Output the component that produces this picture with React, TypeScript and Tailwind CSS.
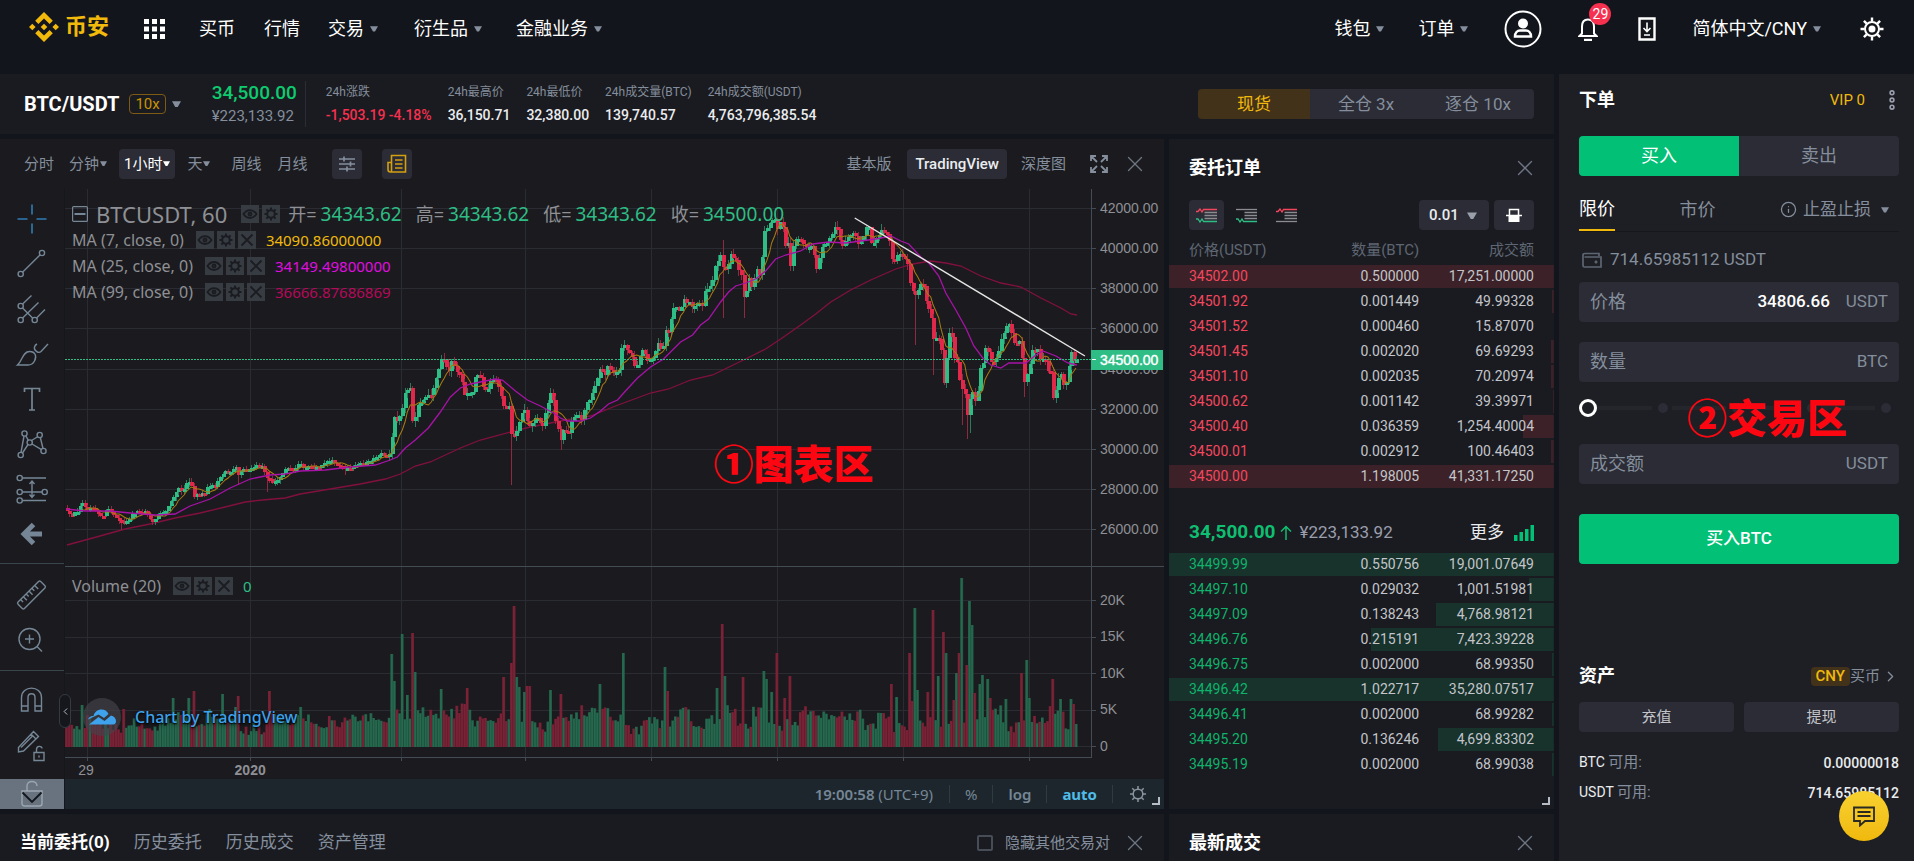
import { useState } from 'react';
import type { ReactNode } from 'react';
import { ChevronLeft, ChevronRight, Info, X } from 'lucide-react';
import clsx from 'clsx';

type Point = [number, number];
type Side = 'ask' | 'bid';

interface BookRow {
  price: string;
  amount: string;
  total: string;
  depth: number;
}

const ASKS: BookRow[] = [
  { price: '34502.00', amount: '0.500000', total: '17,251.00000', depth: 100 },
  { price: '34501.92', amount: '0.001449', total: '49.99328', depth: 0.4 },
  { price: '34501.52', amount: '0.000460', total: '15.87070', depth: 0 },
  { price: '34501.45', amount: '0.002020', total: '69.69293', depth: 0.6 },
  { price: '34501.10', amount: '0.002035', total: '70.20974', depth: 0.6 },
  { price: '34500.62', amount: '0.001142', total: '39.39971', depth: 0.3 },
  { price: '34500.40', amount: '0.036359', total: '1,254.40004', depth: 8 },
  { price: '34500.01', amount: '0.002912', total: '100.46403', depth: 0.7 },
  { price: '34500.00', amount: '1.198005', total: '41,331.17250', depth: 100 },
];

const BIDS: BookRow[] = [
  { price: '34499.99', amount: '0.550756', total: '19,001.07649', depth: 100 },
  { price: '34497.10', amount: '0.029032', total: '1,001.51981', depth: 6.4 },
  { price: '34497.09', amount: '0.138243', total: '4,768.98121', depth: 30.5 },
  { price: '34496.76', amount: '0.215191', total: '7,423.39228', depth: 47.5 },
  { price: '34496.75', amount: '0.002000', total: '68.99350', depth: 0.5 },
  { price: '34496.42', amount: '1.022717', total: '35,280.07517', depth: 100 },
  { price: '34496.41', amount: '0.002000', total: '68.99282', depth: 0.5 },
  { price: '34495.20', amount: '0.136246', total: '4,699.83302', depth: 30 },
  { price: '34495.19', amount: '0.002000', total: '68.99038', depth: 0.5 },
];

const STATS = [
  { label: '24h涨跌', value: '-1,503.19 -4.18%', down: true },
  { label: '24h最高价', value: '36,150.71' },
  { label: '24h最低价', value: '32,380.00' },
  { label: '24h成交量(BTC)', value: '139,740.57' },
  { label: '24h成交额(USDT)', value: '4,763,796,385.54' },
];

const AVERAGES = [
  { name: 'MA (7, close, 0)', value: '34090.86000000', color: 'text-[#f0b90b]' },
  { name: 'MA (25, close, 0)', value: '34149.49800000', color: 'text-[#e00de0]' },
  { name: 'MA (99, close, 0)', value: '36666.87686869', color: 'text-[#b5095a]' },
];

const OHLC = [
  ['开', '34343.62'],
  ['高', '34343.62'],
  ['低', '34343.62'],
  ['收', '34500.00'],
];

// Chart data, in the coordinates of the chart's viewBox
const CLOSES: Point[] = [
  [66, 510], [72, 516], [78, 509], [82, 503], [88, 510], [92, 507], [97, 512], [102, 517], [106, 508], [114, 515],
  [118, 521], [126, 522], [132, 514], [138, 511], [144, 511], [152, 522], [158, 514], [165, 511], [170, 503], [178, 488],
  [182, 493], [187, 482], [191, 483], [193, 496], [197, 493], [204, 494], [208, 486], [215, 486], [220, 476], [225, 472],
  [232, 472], [235, 466], [237, 475], [244, 470], [250, 469], [256, 466], [262, 467], [266, 477], [272, 482], [278, 481],
  [283, 471], [287, 467], [294, 470], [299, 461], [303, 467], [310, 465], [318, 468], [325, 463], [332, 460], [337, 464],
  [344, 469], [352, 467], [358, 463], [366, 463], [374, 457], [382, 453], [386, 457], [389, 454], [392, 435], [394, 418],
  [397, 422], [401, 412], [403, 398], [407, 390], [411, 388], [413, 436], [416, 408], [421, 402], [426, 398], [429, 395],
  [432, 398], [434, 384], [437, 372], [441, 360], [444, 361], [448, 372], [451, 361], [456, 370], [460, 374], [464, 396],
  [468, 391], [473, 394], [475, 373], [480, 378], [483, 389], [487, 391], [491, 380], [496, 379], [500, 392], [504, 408],
  [509, 408], [512, 444], [516, 430], [519, 423], [523, 406], [527, 420], [530, 429], [534, 416], [538, 418], [542, 429],
  [546, 408], [550, 393], [553, 402], [556, 425], [561, 440], [564, 427], [568, 432], [572, 419], [577, 414], [582, 420],
  [585, 402], [590, 398], [595, 385], [600, 369], [605, 374], [608, 366], [614, 373], [618, 371], [621, 341], [626, 350],
  [630, 356], [634, 370], [640, 350], [643, 351], [647, 364], [652, 356], [657, 344], [661, 352], [664, 327], [667, 332],
  [671, 313], [674, 305], [678, 312], [682, 299], [687, 302], [691, 310], [697, 300], [701, 307], [704, 290], [710, 284],
  [714, 268], [719, 254], [722, 269], [726, 266], [730, 254], [734, 259], [737, 270], [741, 276], [743, 306], [747, 276],
  [750, 289], [755, 270], [758, 275], [761, 255], [763, 234], [767, 225], [771, 219], [774, 220], [777, 231], [780, 220],
  [782, 232], [785, 251], [787, 240], [789, 267], [793, 237], [799, 240], [806, 250], [811, 245], [815, 268], [817, 265],
  [820, 247], [827, 240], [834, 227], [836, 230], [841, 248], [846, 236], [853, 235], [858, 245], [861, 240], [864, 226],
  [868, 228], [870, 242], [875, 240], [879, 230], [884, 232], [888, 240], [892, 265], [897, 252], [901, 256], [906, 262],
  [909, 282], [913, 298], [918, 287], [921, 280], [925, 304], [929, 310], [932, 340], [937, 338], [940, 350], [942, 391],
  [945, 360], [948, 333], [951, 340], [954, 365], [957, 363], [959, 392], [963, 383], [965, 418], [969, 400], [971, 391],
  [975, 404], [979, 370], [983, 358], [985, 341], [989, 363], [994, 362], [998, 350], [1001, 335], [1004, 328], [1007, 320],
  [1010, 332], [1014, 345], [1018, 340], [1020, 348], [1023, 383], [1028, 370], [1030, 350], [1036, 349], [1040, 362], [1043, 354],
  [1046, 373], [1049, 368], [1052, 398], [1055, 387], [1059, 373], [1063, 385], [1066, 382], [1069, 350], [1073, 361], [1077, 360],
];

const MA25: Point[] = [
  [66, 509], [85, 511], [110, 511], [130, 513], [155, 515], [175, 514], [190, 506], [210, 499], [230, 488], [250, 479],
  [270, 475], [285, 474], [300, 471], [325, 470], [350, 467], [375, 465], [390, 460], [397, 457], [405, 448], [415, 440],
  [428, 428], [440, 412], [450, 397], [460, 388], [470, 384], [485, 381], [495, 379], [502, 380], [515, 391], [527, 400],
  [540, 406], [553, 413], [560, 418], [567, 421], [580, 421], [590, 418], [600, 411], [608, 404], [617, 400], [625, 391],
  [637, 378], [650, 367], [663, 359], [680, 342], [692, 335], [700, 325], [708, 319], [720, 302], [728, 292], [735, 286],
  [745, 283], [755, 279], [765, 271], [775, 259], [785, 255], [800, 251], [812, 244], [828, 242], [845, 243], [860, 241],
  [875, 239], [890, 236], [900, 241], [908, 244], [920, 257], [928, 263], [938, 276], [945, 293], [955, 310], [965, 328],
  [973, 346], [982, 358], [990, 365], [1000, 368], [1008, 363], [1025, 363], [1035, 355], [1042, 351], [1055, 356], [1067, 363],
  [1076, 365],
];

const MA99: Point[] = [
  [67, 545], [100, 536], [125, 529], [150, 524], [175, 518], [200, 513], [225, 507], [245, 502], [262, 500], [285, 498],
  [300, 494], [330, 489], [360, 484], [385, 479], [400, 474], [415, 466], [430, 462], [460, 448], [480, 440], [510, 432],
  [530, 427], [550, 423], [565, 420], [590, 416], [615, 406], [650, 393], [668, 389], [690, 380], [712, 375], [745, 359],
  [765, 349], [780, 339], [800, 325], [815, 314], [830, 302], [850, 290], [870, 280], [895, 269], [912, 264], [930, 261],
  [945, 263], [960, 266], [980, 276], [1000, 283], [1020, 287], [1040, 298], [1060, 308], [1070, 314], [1076, 315],
];

// x, far end of the wick
const LONG_WICKS: Point[] = [
  [122, 530], [237, 485], [268, 492], [345, 475], [512, 485], [561, 450], [721, 318], [742, 318], [914, 345], [932, 375],
  [960, 425], [967, 439], [970, 433], [1024, 397], [1051, 400],
];

// x, top of the bar, 1 = up
const SPIKES: [number, number, number][] = [
  [81, 705, 1], [87, 715, 0], [123, 709, 0], [173, 698, 1], [188, 698, 1], [193, 691, 0], [222, 694, 1], [238, 696, 0],
  [235, 707, 1], [269, 691, 0], [301, 707, 1], [329, 716, 0], [346, 716, 0], [392, 654, 1], [395, 681, 1], [398, 700, 0],
  [403, 634, 1], [407, 695, 1], [413, 633, 0], [416, 672, 1], [437, 671, 1], [441, 689, 1], [463, 685, 0], [466, 688, 0],
  [504, 677, 0], [510, 663, 0], [513, 606, 0], [516, 677, 1], [518, 687, 1], [523, 692, 1], [528, 686, 0], [549, 690, 1],
  [560, 694, 0], [599, 684, 1], [622, 653, 1], [665, 667, 1], [667, 691, 0], [716, 688, 1], [722, 624, 0], [725, 676, 1],
  [743, 677, 0], [763, 671, 1], [767, 679, 1], [770, 692, 1], [777, 653, 0], [784, 698, 0], [789, 676, 0], [892, 684, 0],
  [895, 697, 1], [908, 653, 0], [911, 701, 0], [915, 608, 1], [918, 690, 1], [926, 692, 0], [933, 610, 0], [937, 676, 1],
  [942, 632, 0], [945, 653, 1], [954, 700, 0], [957, 673, 1], [959, 653, 0], [962, 578, 1], [965, 665, 0], [968, 601, 1],
  [971, 625, 1], [975, 693, 0], [978, 684, 1], [981, 675, 1], [986, 679, 1], [989, 698, 0], [1005, 699, 1], [1022, 673, 0],
  [1025, 660, 1], [1028, 698, 1], [1052, 679, 0], [1060, 699, 1], [1070, 699, 1], [1073, 704, 0],
];

const PRICE_TICKS = [42000, 40000, 38000, 36000, 34000, 32000, 30000, 28000, 26000];
const VOLUME_TICKS = ['20K', '15K', '10K', '5K', '0'];
const GRID_X = [87, 250, 401, 525, 650, 776, 902, 1028];
const STEP = 2.6;

function noise(n: number) {
  const v = Math.sin(n * 127.1 + 11.7) * 43758.5453;
  return v - Math.floor(v);
}

function sample(points: Point[], x: number) {
  const i = points.findIndex((p) => p[0] >= x);
  if (i <= 0) return i === 0 ? points[0][1] : points[points.length - 1][1];
  const [x0, y0] = points[i - 1];
  const [x1, y1] = points[i];
  return y0 + ((y1 - y0) * (x - x0)) / (x1 - x0);
}

function near<T extends number[]>(list: T[], x: number): T | undefined {
  return list.find((p) => Math.abs(p[0] - x) <= STEP / 2);
}

const line = (points: Point[]) => points.map((p) => p.join(',')).join(' ');

function buildCandles() {
  const candles = [];
  let open = 508;
  for (let i = 0; i < 389; i++) {
    const x = 66.5 + i * STEP;
    const calm = x < 388 ? 2.5 : 4;
    const close = sample(CLOSES, x) + (noise(i) - 0.5) * calm;
    let high = Math.min(open, close) - noise(i + 500) * calm * 1.5;
    let low = Math.max(open, close) + noise(i + 900) * calm * 1.5;
    const wick = near(LONG_WICKS, x);
    if (wick) low = wick[1];
    if (wick && wick[0] === 721) high = 240;
    const bodyUp = close <= open;
    let up = bodyUp;
    const base = x < 388 ? 8 : 12;
    let top = 747 - base - noise(i + 40) * 12 - noise(Math.floor(i / 6) + 70) * 20;
    const spike = near(SPIKES, x);
    if (spike) {
      top = spike[1];
      up = spike[2] === 1;
    }
    candles.push({ x, open, close, high, low, bodyUp, up, top });
    open = close;
  }
  return candles;
}

const CANDLES = buildCandles();
const MA7: Point[] = CANDLES.slice(6).map((c, i) => [
  Math.round(c.x),
  Math.round(CANDLES.slice(i, i + 7).reduce((sum, k) => sum + k.close, 0) / 7),
]);

function Caret({ className = 'w-2 text-[#848e9c]' }: { className?: string }) {
  return (
    <svg viewBox="0 0 8 6" className={clsx('inline-block shrink-0', className)} fill="currentColor" aria-hidden="true">
      <path d="M0 0.3h8L5 5.6H3z" />
    </svg>
  );
}

function CloseButton({ className }: { className?: string }) {
  return (
    <button aria-label="close" className={clsx('text-[#6d7683]', className)}>
      <X size={26} strokeWidth={1.2} />
    </button>
  );
}

function ResizeMark() {
  return <span className="pointer-events-none absolute right-1 bottom-1 size-2 border-r-2 border-b-2 border-[#b7bdc6]" />;
}

function Logo() {
  return (
    <a href="#" className="flex items-center gap-1.5 pb-1 text-[#f0b90b]">
      <svg viewBox="0 0 30 30" className="size-[30px]" fill="currentColor" aria-hidden="true">
        <path d="M15 0l8.800 8.800-3.200 3.200L15 6.400 9.400 12 6.200 8.800z" />
        <path d="M15 30l8.800-8.800-3.200-3.200L15 23.600 9.400 18l-3.200 3.200z" />
        <path d="M15 11.700l3.300 3.300-3.300 3.300-3.300-3.300zM3.300 11.700L6.600 15l-3.300 3.300L0 15zM26.700 11.700L30 15l-3.300 3.300-3.300-3.300z" />
      </svg>
      <span className="text-[22px] leading-7 font-bold">币安</span>
    </a>
  );
}

function Header() {
  return (
    <header className="flex h-[74px] items-center justify-between pr-[30px] pb-4 pl-[29px] text-lg leading-6 whitespace-nowrap text-white">
      <nav className="flex items-center">
        <Logo />
        <button className="mr-[34px] ml-[35px]" aria-label="menu">
          <svg viewBox="0 0 21 20" className="h-5 w-[21px]" fill="currentColor">
            {[0, 8, 16].flatMap((x) => [0, 7.5, 15].map((y) => <rect key={`${x}-${y}`} x={x} y={y} width="5" height="5" />))}
          </svg>
        </button>
        <a href="#" className="mr-[29px]">买币</a>
        <a href="#" className="mr-7">行情</a>
        <button className="mr-9 flex items-center gap-1.5">交易<Caret /></button>
        <button className="mr-[34px] flex items-center gap-1.5">衍生品<Caret /></button>
        <button className="flex items-center gap-1.5">金融业务<Caret /></button>
      </nav>
      <div className="flex items-center">
        <button className="mr-[34px] flex items-center gap-1.5">钱包<Caret /></button>
        <button className="mr-9 flex items-center gap-1.5">订单<Caret /></button>
        <button className="mr-9" aria-label="account">
          <svg viewBox="0 0 38 38" className="size-[38px]" fill="none" stroke="currentColor" strokeWidth="2">
            <circle cx="19" cy="19" r="17.500" />
            <circle cx="19" cy="13.500" r="4" fill="currentColor" />
            <path d="M11 26.500c0-4 2.500-6 5-6h6c2.500 0 5 2 5 6z" strokeWidth="2.500" />
          </svg>
        </button>
        <button className="relative mr-10" aria-label="notifications">
          <svg viewBox="0 0 20 24" className="h-6 w-5" fill="none" stroke="currentColor" strokeWidth="2">
            <path d="M4 16.500V9.500C4 5 6.500 2.500 10 2.500s6 2.500 6 7v7l2.500 2.500h-17z" />
            <path d="M6 23h8" strokeWidth="2.400" />
          </svg>
          <span className="absolute -top-[14px] left-[11px] grid size-[22px] place-items-center rounded-full bg-[#f6304f] text-sm">29</span>
        </button>
        <button className="mr-9" aria-label="download">
          <svg viewBox="0 0 18 24" className="h-6 w-[18px]" fill="none" stroke="currentColor" strokeWidth="2">
            <path d="M1.500 1.500h15v21h-15z" strokeWidth="2.400" />
            <path d="M9 5.500v9M5.500 11L9 14.500 12.500 11M6 18h6" strokeWidth="1.600" />
          </svg>
        </button>
        <button className="mr-[39px] flex items-center gap-1.5">简体中文/CNY<Caret /></button>
        <button aria-label="settings">
          <svg viewBox="0 0 24 24" className="size-6" fill="none" stroke="currentColor" strokeWidth="2">
            <circle cx="12" cy="12" r="7" />
            <circle cx="12" cy="12" r="2.500" fill="currentColor" />
            <path d="M12 0.500v4M12 19.500v4M0.500 12h4M19.500 12h4M3.900 3.900l2.800 2.800M17.300 17.300l2.800 2.800M3.900 20.100l2.800-2.800M17.300 6.700l2.800-2.800" strokeWidth="2.400" />
          </svg>
        </button>
      </div>
    </header>
  );
}

function TickerBar() {
  const [mode, setMode] = useState('现货');
  return (
    <section className="flex h-[60px] items-center justify-between bg-[#1a1b20] pr-5 pl-6 whitespace-nowrap">
      <div className="flex items-center">
        <h1 className="text-xl font-bold text-white">BTC/USDT</h1>
        <span className="ml-2.5 rounded-sm border border-[#7d5a16] px-[5px] text-[15px] leading-[18px] text-[#c99400]">10x</span>
        <Caret className="ml-1.5 w-[9px] text-[#848e9c]" />
        <div className="ml-[31px] border-r border-[#2b2c35] pr-2">
          <p className="text-[19px] leading-6 font-medium text-[#0ecb6f]">34,500.00</p>
          <p className="text-[15px] leading-[22px] text-[#848e9c]">¥223,133.92</p>
        </div>
        <dl className="ml-5 flex gap-4">
          {STATS.map((s) => (
            <div key={s.label}>
              <dt className="text-xs leading-[22px] text-[#848e9c]">{s.label}</dt>
              <dd className={clsx('text-sm leading-6 font-medium', s.down ? 'text-[#f6304f]' : 'text-[#eaecef]')}>{s.value}</dd>
            </div>
          ))}
        </dl>
      </div>
      <div className="flex overflow-hidden rounded">
        {['现货', '全仓 3x', '逐仓 10x'].map((m) => (
          <button
            key={m}
            onClick={() => setMode(m)}
            className={clsx('h-[30px] w-28 text-[17px] leading-6', mode === m ? 'bg-[#43321a] text-[#f0b90b]' : 'bg-[#2b2c35] text-[#848e9c]')}
          >
            {m}
          </button>
        ))}
      </div>
    </section>
  );
}

function ChartToolbar() {
  return (
    <div className="flex h-[50px] items-center justify-between pr-4 pl-6 text-[15px] leading-6 whitespace-nowrap text-[#848e9c]">
      <div className="flex items-center">
        <button className="mr-[15px]">分时</button>
        <button className="mr-3 flex items-center gap-px">分钟<Caret className="w-[7px]" /></button>
        <button className="mr-3 flex h-[30px] items-center gap-px rounded-sm bg-[#2b2c35] px-[5px] text-white">1小时<Caret className="w-[7px]" /></button>
        <button className="mr-[21px] flex items-center gap-px">天<Caret className="w-[7px]" /></button>
        <button className="mr-4">周线</button>
        <button className="mr-6">月线</button>
        <button className="mr-5 grid size-[30px] place-items-center rounded-sm bg-[#2b2c35]" aria-label="indicators">
          <svg viewBox="0 0 16 16" className="size-4" fill="none" stroke="currentColor" strokeWidth="1.700">
            <path d="M0 3h16M0 8h16M0 13h16M5 0.500v5M11.500 5.500v5M8 10.500v5" />
          </svg>
        </button>
        <button className="grid size-[30px] place-items-center rounded-sm bg-[#2b2c35] text-[#d3a010]" aria-label="news">
          <svg viewBox="0 0 20 20" className="size-5" fill="none" stroke="currentColor" strokeWidth="1.600">
            <path d="M4.500 18V1.500h14V18H3.500C2 18 1 17 1 15.500V8.500h3.500M8 6h7.500M8 10h7.500M8 14h7.500" />
          </svg>
        </button>
      </div>
      <div className="flex items-center">
        <button className="mr-4">基本版</button>
        <button className="mr-[14px] h-[30px] rounded-sm bg-[#2b2c35] px-2 font-medium text-[#eaecef]">TradingView</button>
        <button className="mr-6">深度图</button>
        <button className="mr-[14px]" aria-label="fullscreen">
          <svg viewBox="0 0 18 18" className="size-[18px]" fill="none" stroke="currentColor" strokeWidth="1.800">
            <path d="M1 6V1h5M12 1h5v5M17 12v5h-5M6 17H1v-5M1 1l6 6M17 1l-6 6M17 17l-6-6M1 17l6-6" />
          </svg>
        </button>
        <CloseButton />
      </div>
    </div>
  );
}

function Tool({ label, children, className = 'text-[#758696]' }: { label: string; children: ReactNode; className?: string }) {
  return (
    <button aria-label={label} className={clsx('grid h-[45px] w-16 place-items-center', className)}>
      <svg viewBox="0 0 36 36" className="size-9" fill="none" stroke="currentColor" strokeWidth="1.400">
        {children}
      </svg>
    </button>
  );
}

const dots = (list: Point[]) => list.map(([x, y]) => <circle key={`${x}-${y}`} cx={x} cy={y} r="2.600" />);

function DrawingTools() {
  return (
    <aside className="flex w-[65px] shrink-0 flex-col border-r border-[#15171c] pt-[7px]">
      <Tool label="crosshair" className="text-[#2e7db5]">
        <path d="M3.500 18h10M22.500 18h10M18 3.500v10M18 22.500v10" strokeWidth="1.600" />
      </Tool>
      <Tool label="trend line">
        <path d="M8.500 26.200L26.200 8.800" />
        {dots([[6.7, 28], [28, 7]])}
      </Tool>
      <Tool label="pitchfork">
        <path d="M8.600 13L17.500 4.500M8.600 27L24.500 11.500M8.600 17l10 10M22.600 27l8.400-8.500" />
        {dots([[6.7, 15], [6.7, 29], [20.7, 29]])}
      </Tool>
      <Tool label="brush">
        <path d="M3.500 29C8.500 25 8.500 15.500 15.500 15.500c6 0 7.500 5 5 9.500-1.500 3-4 4-6.500 4zM34 8l-7 7.500c-2.500 2.500-7.500-1.500-6.500-4.500.5-1.500 1.500-2.500 2.500-3" />
      </Tool>
      <Tool label="text">
        <path d="M10.500 11V7.500h15V11M18 7.500V29M15 29h6" strokeWidth="1.700" />
      </Tool>
      <Tool label="pattern">
        <path d="M7 26.500L10 10M8.500 27L14 18.500M11.800 9.800l2.600 4.600M17.500 14.500l6.500-4M18 18l9.500 5.700M26.300 11.500l2.700 11" />
        {dots([[6.7, 29], [10.5, 7.5], [15.7, 16.5], [25.7, 9], [29.5, 25]])}
      </Tool>
      <Tool label="forecast">
        <path d="M8.500 7H32M8.500 21H28M8.500 29.500H32M18 10v16M15.500 13L18 10l2.500 3M15.500 23.500L18 26.500l2.500-3" />
        {dots([[5.7, 7], [5.7, 21], [30.7, 21], [5.7, 29.5]])}
      </Tool>
      <Tool label="back">
        <path d="M28 18H11M19.500 8.500L10 18l9.500 9.500" strokeWidth="5" />
      </Tool>
      <div className="mt-[7px] border-t border-[#3a444d] pt-2">
        <Tool label="ruler">
          <g transform="translate(17.500 18) rotate(-45)">
            <rect x="-16" y="-4.500" width="32" height="9" rx="1.500" />
            <path d="M-11-4.500v3.500M-7-4.500v5M-3-4.500v3.500M1-4.500v5M5-4.500v3.500M9-4.500v5" />
          </g>
        </Tool>
        <Tool label="zoom">
          <circle cx="15.500" cy="17" r="10.500" />
          <path d="M23 24.500l5 5M15.500 12.500v9M11 17h9" />
        </Tool>
      </div>
      <div className="mt-2 border-t border-[#3a444d] pt-1.5">
        <Tool label="magnet">
          <path d="M7.500 29V15.500C7.500 3 27.500 3 27.500 15.500V29h-6.500V15.500c0-5-7-5-7 0V29zM7.500 24H14M21 24h6.500" />
        </Tool>
        <Tool label="lock drawing">
          <path d="M4.500 23.500L19.500 7.500l5 5L9.500 27l-5 1zM17 10l5 5M7 23.500L19 11.500M20 28.500h10v8H20zM22.500 28.500v-3c0-4 5.500-4 5.500-1M25 31.500v2" transform="translate(0 -3)" />
        </Tool>
      </div>
      <button aria-label="unlock" className="mt-auto grid h-[30px] w-16 place-items-center bg-[#68737f]">
        <svg viewBox="0 0 22 28" className="h-7 w-[22px]" fill="none" stroke="#9aa7b2" strokeWidth="1.400">
          <path d="M1 11h20v12.500c0 1.500-1 2.500-2.500 2.500h-15C2 26 1 25 1 23.500zM6 11V6c0-6 10-6 10 0" />
          <path d="M1.500 12.500L11 22l9.500-9.500" stroke="#12161c" strokeWidth="1.800" />
        </svg>
      </button>
    </aside>
  );
}

function LegendButtons({ closable = true }: { closable?: boolean }) {
  const box = 'grid size-[18px] place-items-center bg-[#363c42] text-[#1b1c21]';
  return (
    <span className="flex gap-[3px]">
      <button className={box} aria-label="visibility">
        <svg viewBox="0 0 16 16" className="size-4" fill="none" stroke="currentColor" strokeWidth="1.800">
          <path d="M1.500 8c3.500-5.300 9.500-5.300 13 0-3.500 5.300-9.500 5.300-13 0z" />
          <circle cx="8" cy="8" r="1.500" />
        </svg>
      </button>
      <button className={box} aria-label="format">
        <svg viewBox="0 0 16 16" className="size-4" fill="none" stroke="currentColor" strokeWidth="2">
          <circle cx="8" cy="8" r="3.800" />
          <path d="M8 1.500V4M8 12v2.500M1.500 8H4M12 8h2.500M3.400 3.400l1.800 1.800M10.800 10.800l1.800 1.800M3.400 12.600l1.800-1.800M10.800 5.200l1.800-1.800" />
        </svg>
      </button>
      {closable && (
        <button className={box} aria-label="remove">
          <svg viewBox="0 0 16 16" className="size-4" stroke="currentColor" strokeWidth="1.800">
            <path d="M2.500 2.500l11 11M13.500 2.500l-11 11" />
          </svg>
        </button>
      )}
    </span>
  );
}

function Plot() {
  return (
    <svg viewBox="65 189 1098 590" preserveAspectRatio="none" className="block h-[590px] w-full font-['Liberation_Sans',sans-serif] text-sm">
      <g stroke="#2b2c33" strokeWidth="1" shapeRendering="crispEdges">
        {GRID_X.map((x) => <path key={x} d={`M${x + 0.5} 189V757`} />)}
        {PRICE_TICKS.map((t, i) => <path key={t} d={`M65 ${Math.round(208 + i * 40.15) + 0.5}H1091`} />)}
        {VOLUME_TICKS.map((t, i) => <path key={t} d={`M65 ${Math.round(600 + i * 36.5) + 0.5}H1091`} />)}
      </g>
      <g>
        {CANDLES.map((c) => (
          <rect key={c.x} x={c.x - 1.4} y={c.top} width="2.800" height={747 - c.top} fill={c.up ? '#25694f' : '#7c2237'} />
        ))}
      </g>
      <g stroke="#1b1b1f" strokeOpacity="0.350" strokeWidth="0.600">
        {CANDLES.map((c) => <path key={c.x} d={`M${c.x + 1.3} ${c.top}V747`} />)}
      </g>
      <polyline points={line(MA99)} fill="none" stroke="#82103f" strokeWidth="1.300" />
      <g shapeRendering="crispEdges">
        {CANDLES.map((c) => {
          const y = Math.min(c.open, c.close);
          return (
            <g key={c.x}>
              <rect x={Math.round(c.x)} y={c.high} width="1" height={c.low - c.high} fill={c.bodyUp ? '#2b7a5b' : '#8e2a40'} />
              <rect x={Math.round(c.x) - 1} y={y} width="4" height={Math.max(3, Math.abs(c.open - c.close))} fill={c.bodyUp ? '#2ebd85' : '#e0294a'} />
            </g>
          );
        })}
      </g>
      <polyline points={line(MA7)} fill="none" stroke="#a87c10" strokeWidth="1" />
      <polyline points={line(MA25)} fill="none" stroke="#a812a8" strokeWidth="1.300" />
      <path d="M854 218L1084 356" stroke="#e6e6e6" strokeWidth="1.400" />
      <path d="M65 359.500H1091" stroke="#2ebd85" strokeDasharray="2 1" shapeRendering="crispEdges" />
      <g stroke="#434b55" strokeWidth="1" fill="none" shapeRendering="crispEdges">
        <path d="M1091 189V757M65 566.500H1163M65 757H1091" />
        {PRICE_TICKS.map((t, i) => <path key={t} d={`M1091 ${Math.round(208 + i * 40.15) + 0.5}h4`} />)}
        {VOLUME_TICKS.map((t, i) => <path key={t} d={`M1091 ${Math.round(600 + i * 36.5) + 0.5}h4`} />)}
        {GRID_X.map((x) => <path key={x} d={`M${x + 0.5} 757v4`} />)}
      </g>
      <g fill="#8e9095">
        {PRICE_TICKS.map((t, i) => <text key={t} x="1099" y={213 + i * 40.15}>{`${t}.00`}</text>)}
        {VOLUME_TICKS.map((t, i) => <text key={t} x="1099" y={605 + i * 36.5}>{t}</text>)}
        <text x="86" y="775" textAnchor="middle">29</text>
        <text x="250" y="775" textAnchor="middle" fontWeight="700">2020</text>
      </g>
      <rect x="1090" y="350" width="72" height="20" fill="#2ebd85" />
      <path d="M1091 359.500h4" stroke="#fff" />
      <text x="1099" y="365" fill="#fff" stroke="#fff" strokeWidth="0.400">34500.00</text>
    </svg>
  );
}

function Chart() {
  return (
    <div className="relative font-['Noto_Sans','Noto_Sans_CJK_SC',sans-serif] whitespace-nowrap text-[#8e9095]">
      <Plot />
      <div className="absolute top-3 left-[7px]">
        <div className="flex h-[26px] items-center">
          <svg viewBox="0 0 16 16" className="mr-2 size-4" fill="none" stroke="#758696" strokeWidth="1.200">
            <rect x="0.600" y="0.600" width="14.800" height="14.800" rx="1" />
            <path d="M2.500 8h11" strokeWidth="2" />
          </svg>
          <span className="mr-3.5 text-[22px] leading-[26px]">BTCUSDT, 60</span>
          <LegendButtons closable={false} />
          <dl className="ml-2 flex gap-3.5 leading-[26px]">
            {OHLC.map(([name, value]) => (
              <div key={name} className="flex gap-1">
                <dt className="text-lg leading-[26px]">{name}=</dt>
                <dd className="text-[19px] text-[#2ebd85]">{value}</dd>
              </div>
            ))}
          </dl>
        </div>
        {AVERAGES.map((ma) => (
          <div key={ma.name} className="flex h-[26px] items-center">
            <span className="mr-3 text-base">{ma.name}</span>
            <LegendButtons />
            <span className={clsx('ml-2.5 text-[15px]', ma.color)}>{ma.value}</span>
          </div>
        ))}
      </div>
      <div className="absolute top-[384px] left-[7px] flex h-[26px] items-center">
        <span className="mr-3 text-base">Volume (20)</span>
        <LegendButtons />
        <span className="ml-2.5 text-[15px] text-[#2ebd85]">0</span>
      </div>
      <a href="#" className="absolute top-[509px] left-[18px] flex items-center gap-3.5 text-base font-medium text-[#3ea2ec] text-shadow-md/60">
        <svg viewBox="0 0 38 38" className="size-[38px]">
          <circle cx="19" cy="19" r="19" fill="#43434b" fillOpacity="0.650" />
          <path d="M5 21.500c1-3 3.500-3.500 5.500-3.500 1-4 4-6.500 8-6.500 3.500 0 6 2 7 4.500L21 20l-5.500-3.500zM6 26.500l9.500-7.500 6 4 6.500-5.500c3 .5 5 3 5 5.500 0 2-1 3.500-2.500 3.500z" fill="#3ea2ec" />
        </svg>
        Chart by TradingView
      </a>
      <button aria-label="collapse" className="absolute top-[505px] -left-1.5 grid h-[34px] w-3 place-items-center rounded-full border border-[#343a42] bg-[#15171c]">
        <ChevronLeft size={11} className="text-[#c3c9d0]" />
      </button>
      <p className="absolute top-[243px] left-[59%] font-['Noto_Sans_CJK_SC',sans-serif] text-[40px] leading-[60px] font-black text-[#fc0711]">①图表区</p>
    </div>
  );
}

function ChartFooter() {
  return (
    <div className="flex h-[30px] items-center justify-end bg-[#1d262c] pr-[17px] font-['Noto_Sans',sans-serif] text-[15px] leading-[30px] text-[#758696]">
      <span className="pr-4"><b className="font-semibold">19:00:58</b> (UTC+9)</span>
      <button className="border-l border-[#2f3a42] px-[15px] leading-[18px]">%</button>
      <button className="border-l border-[#2f3a42] px-[15px] leading-[18px] font-semibold">log</button>
      <button className="border-l border-[#2f3a42] px-[15px] leading-[18px] font-bold text-[#4fbde8]">auto</button>
      <button className="border-l border-[#2f3a42] pl-4" aria-label="chart settings">
        <svg viewBox="0 0 18 18" className="size-[18px]" fill="none" stroke="#8a949e" strokeWidth="1.500">
          <circle cx="9" cy="9" r="4.800" />
          <path d="M9 1v3M9 14v3M1 9h3M14 9h3M3.300 3.300l2.200 2.200M12.500 12.500l2.200 2.200M3.300 14.700l2.200-2.200M12.500 5.500l2.200-2.200" />
        </svg>
      </button>
    </div>
  );
}

function OrdersBar() {
  return (
    <section className="flex min-w-0 flex-1 bg-[#1a1b20] pt-[11px] pr-4 pl-5 whitespace-nowrap text-[#848e9c]">
      <div className="flex h-9 flex-1 items-center gap-6 text-[17px]">
        <button className="font-bold text-white">当前委托(0)</button>
        <button>历史委托</button>
        <button>历史成交</button>
        <button>资产管理</button>
      </div>
      <div className="flex h-9 items-center">
        <input id="hide-pairs" type="checkbox" className="mr-3 size-4 appearance-none rounded-xs border-2 border-[#474d57]" />
        <label htmlFor="hide-pairs" className="mr-3 text-[15px]">隐藏其他交易对</label>
        <CloseButton />
      </div>
    </section>
  );
}

function BookIcon({ asks, bids }: { asks?: boolean; bids?: boolean }) {
  return (
    <svg viewBox="0 0 21 15" className="h-[15px] w-[21px]" fill="none" strokeWidth="1.300">
      <path d="M8.500 4.500H21M8.500 7.500H21M8.500 10.500H21" stroke="#8b8c92" />
      <path d={asks ? 'M0 3.500h2L4 1l2 3 1.500-2.500H21' : 'M0 1.500h21'} stroke={asks ? '#f6465d' : '#8b8c92'} />
      <path d={bids ? 'M0 11h2l2 3 2-3 1.500 2.500H21' : 'M0 13.500h21'} stroke={bids ? '#2ebd85' : '#8b8c92'} />
    </svg>
  );
}

function BookRows({ rows, side, head }: { rows: BookRow[]; side: Side; head?: boolean }) {
  const tint = side === 'ask' ? '#3c2228' : '#17332c';
  return (
    <table className="w-full table-fixed border-separate border-spacing-x-0 border-spacing-y-0.5 text-sm leading-[23px] whitespace-nowrap">
      <colgroup>
        <col className="w-[33%]" />
        <col className="w-[32%]" />
        <col className="w-[35%]" />
      </colgroup>
      {head && (
        <thead className="text-[15px] leading-[25px] text-[#5e6673]">
          <tr>
            <th className="p-0 pl-5 text-left font-normal">价格(USDT)</th>
            <th className="p-0 text-right font-normal">数量(BTC)</th>
            <th className="p-0 pr-5 text-right font-normal">成交额</th>
          </tr>
        </thead>
      )}
      <tbody className="text-[#c3c5ca]">
        {rows.map((r) => (
          <tr key={r.price} style={{ background: `linear-gradient(to left, ${tint} ${r.depth}%, transparent ${r.depth}%)` }}>
            <td className={clsx('p-0 pl-5', side === 'ask' ? 'text-[#f6465d]' : 'text-[#0fb36b]')}>{r.price}</td>
            <td className="p-0 text-right">{r.amount}</td>
            <td className="p-0 pr-5 text-right">{r.total}</td>
          </tr>
        ))}
      </tbody>
    </table>
  );
}

function OrderBook() {
  return (
    <section className="relative w-[385px] shrink-0 bg-[#1a1b20]">
      <div className="flex h-[61px] items-center justify-between px-5 pb-[3px]">
        <h2 className="text-lg font-bold text-white">委托订单</h2>
        <CloseButton className="-mr-1" />
      </div>
      <div className="mb-[6px] flex h-[30px] items-center px-5">
        <button className="mr-3 grid h-[30px] w-[35px] place-items-center rounded-sm bg-[#2b2c35]" aria-label="all orders"><BookIcon asks bids /></button>
        <button className="mr-[19px]" aria-label="buy orders"><BookIcon bids /></button>
        <button aria-label="sell orders"><BookIcon asks /></button>
        <div className="relative mr-[5px] ml-auto">
          <select aria-label="precision" className="h-[30px] w-[70px] appearance-none rounded-sm bg-[#2b2c35] pl-2.5 text-[15px] font-medium text-[#eaecef]">
            <option>0.01</option>
            <option>0.1</option>
          </select>
          <Caret className="pointer-events-none absolute top-3 right-3 w-2.5 text-[#9aa0aa]" />
        </div>
        <button className="grid h-[30px] w-10 place-items-center rounded-sm bg-[#2b2c35]" aria-label="print">
          <svg viewBox="0 0 16 15" className="h-[15px] w-4" fill="none" stroke="#fff" strokeWidth="1.500">
            <path d="M3.500 7V1.500h9V7M0 7.500h16" />
            <path d="M2.500 7h11v7h-11z" fill="#fff" stroke="none" />
          </svg>
        </button>
      </div>
      <BookRows rows={ASKS} side="ask" head />
      <div className="flex h-[61px] items-center px-5 pt-6">
        <strong className="text-[19px] font-bold text-[#0fbf71]">34,500.00</strong>
        <svg viewBox="0 0 12 15" className="mx-1 h-[15px] w-3" fill="none" stroke="#0fbf71" strokeWidth="1.500" aria-hidden="true">
          <path d="M6 15V1.500M1 6.500l5-5 5 5" />
        </svg>
        <span className="ml-1 text-[17px] text-[#9a9ead]">¥223,133.92</span>
        <a href="#" className="ml-auto flex items-center gap-2.5 text-[17px] text-[#eaecef]">
          更多
          <svg viewBox="0 0 20 16" className="h-4 w-5" fill="#02c076" aria-hidden="true">
            <path d="M0 10h3.500v6H0zM5.500 7H9v9H5.500zM11 4h3.500v12H11zM16.500 0H20v16h-3.500z" />
          </svg>
        </a>
      </div>
      <BookRows rows={BIDS} side="bid" />
      <ResizeMark />
    </section>
  );
}

function Field({ id, label, unit, value, className }: { id: string; label: string; unit: string; value?: string; className: string }) {
  return (
    <div className={clsx('flex h-10 items-center rounded bg-[#2b2c35] px-[11px] text-[17px] text-[#848e9c]', className)}>
      <label htmlFor={id} className="shrink-0 text-lg">{label}</label>
      <input id={id} defaultValue={value} className="min-w-0 flex-1 bg-transparent px-4 text-right font-medium text-white outline-none" />
      <span>{unit}</span>
    </div>
  );
}

function TradePanel() {
  const [side, setSide] = useState('买入');
  return (
    <aside className="w-[355px] shrink-0 bg-[#1e1f24] pt-3 pr-[15px] pl-5 whitespace-nowrap text-[#848e9c]">
      <div className="flex h-7 items-center">
        <h2 className="flex-1 text-lg font-bold text-white">下单</h2>
        <a href="#" className="mr-6 text-[15px] text-[#f0b90b]">VIP 0</a>
        <button aria-label="more" className="mr-1">
          <svg viewBox="0 0 6 20" className="h-5 w-[6px]" fill="none" stroke="#9a9ead" strokeWidth="1.600">
            <circle cx="3" cy="2.800" r="1.900" />
            <circle cx="3" cy="10" r="1.900" />
            <circle cx="3" cy="17.200" r="1.900" />
          </svg>
        </button>
      </div>
      <div className="mt-[22px] flex overflow-hidden rounded text-lg">
        {['买入', '卖出'].map((s) => (
          <button key={s} onClick={() => setSide(s)} className={clsx('h-10 flex-1', side === s ? 'bg-[#02c076] text-white' : 'bg-[#2b2c35]')}>
            {s}
          </button>
        ))}
      </div>
      <div className="mt-3 flex h-11 justify-between border-b border-[#16181c] text-lg">
        <button className="border-b-2 border-[#f0b90b] text-white">限价</button>
        <button>市价</button>
        <button className="flex items-center gap-1.5 pr-2.5 text-[17px]">
          <Info size={17} strokeWidth={1.8} />
          止盈止损
          <Caret className="ml-1 w-2" />
        </button>
      </div>
      <div className="mt-[14px] flex h-7 items-center gap-2 pl-[3px] text-[17px]">
        <svg viewBox="0 0 20 16" className="h-4 w-5" fill="none" stroke="#5e6673" strokeWidth="1.700" aria-hidden="true">
          <path d="M17 4V1.500H3C1.800 1.500 1 2 1 3v10.500c0 .8.700 1.500 1.500 1.500H19V5H2.500M14 8.500v3M12.500 10h3" />
        </svg>
        714.65985112 USDT
      </div>
      <Field id="price" label="价格" unit="USDT" value="34806.66" className="mt-2" />
      <Field id="amount" label="数量" unit="BTC" className="mt-5" />
      <div className="relative mt-4">
        <div className="flex h-5 items-center pr-1 pl-[18px]">
          {[25, 50, 75, 100].map((n) => (
            <div key={n} className="flex flex-1 items-center">
              <span className="mr-1.5 h-1 flex-1 bg-[#25262c]" />
              <span className="mr-1 size-2.5 rounded-full bg-[#2b2c35]" />
            </div>
          ))}
        </div>
        <input
          type="range"
          aria-label="amount percent"
          defaultValue={0}
          className="absolute inset-0 h-5 w-full appearance-none bg-transparent [&::-webkit-slider-thumb]:size-[18px] [&::-webkit-slider-thumb]:appearance-none [&::-webkit-slider-thumb]:rounded-full [&::-webkit-slider-thumb]:border-3 [&::-webkit-slider-thumb]:border-white [&::-webkit-slider-thumb]:bg-[#1e1f24]"
        />
        <p className="pointer-events-none absolute -top-3 left-[108px] font-['Noto_Sans_CJK_SC',sans-serif] text-[40px] leading-[60px] font-black text-[#fc0711]">②交易区</p>
      </div>
      <Field id="total" label="成交额" unit="USDT" className="mt-[26px]" />
      <button className="mt-[30px] h-[50px] w-full rounded bg-[#02c076] text-[17px] font-medium text-white">买入BTC</button>

      <div className="mt-[98px] flex h-7 items-center text-[15px]">
        <h2 className="flex-1 text-lg font-bold text-white">资产</h2>
        <a href="#" className="flex items-center">
          <span className="rounded-sm bg-[#43321a] px-[5px] leading-[19px] font-medium text-[#f0b90b]">CNY</span>
          买币
          <ChevronRight size={17} strokeWidth={1.8} className="ml-0.5" />
        </a>
      </div>
      <div className="mt-3 flex gap-2.5 text-[15px] text-[#c3c5ca]">
        <button className="h-[30px] flex-1 rounded-sm bg-[#2b2c35]">充值</button>
        <button className="h-[30px] flex-1 rounded-sm bg-[#2b2c35]">提现</button>
      </div>
      <dl className="mt-4 text-sm text-[#eaecef]">
        {[['BTC', '0.00000018'], ['USDT', '714.65985112']].map(([coin, amount]) => (
          <div key={coin} className="flex h-[30px] items-center justify-between">
            <dt>{coin} <span className="text-[15px] text-[#848e9c]">可用:</span></dt>
            <dd className="font-medium">{amount}</dd>
          </div>
        ))}
      </dl>
    </aside>
  );
}

export default function App() {
  return (
    <div className="flex min-h-screen flex-col bg-[#12151b] font-['Roboto','Noto_Sans_CJK_SC',sans-serif]">
      <Header />
      <main className="flex flex-1 gap-[5px]">
        <div className="flex min-w-0 flex-1 flex-col gap-[5px]">
          <TickerBar />
          <div className="flex flex-1 gap-[5px]">
            <section className="relative flex min-w-0 flex-1 flex-col bg-[#1b1b1f]">
              <ChartToolbar />
              <div className="flex flex-1">
                <DrawingTools />
                <div className="min-w-0 flex-1">
                  <Chart />
                  <ChartFooter />
                </div>
              </div>
              <ResizeMark />
            </section>
            <OrderBook />
          </div>
          <div className="flex gap-[5px]">
            <OrdersBar />
            <section className="w-[385px] shrink-0 bg-[#1a1b20] px-5 pt-[11px]">
              <div className="flex h-9 items-center justify-between">
                <h2 className="text-lg font-bold text-white">最新成交</h2>
                <CloseButton className="-mr-1" />
              </div>
            </section>
          </div>
        </div>
        <TradePanel />
      </main>
      <button aria-label="chat" className="fixed right-[25px] bottom-5 grid size-[50px] place-items-center rounded-full bg-linear-to-b from-[#f8d12f] to-[#f0b90b]">
        <svg viewBox="0 0 22 21" className="h-[21px] w-[22px]" fill="none" stroke="#2b2a22" strokeWidth="1.800">
          <path d="M1 1.500h20v13.500H12L7 19.500V15H1zM4.500 6h13M4.500 10h13" />
        </svg>
      </button>
    </div>
  );
}
